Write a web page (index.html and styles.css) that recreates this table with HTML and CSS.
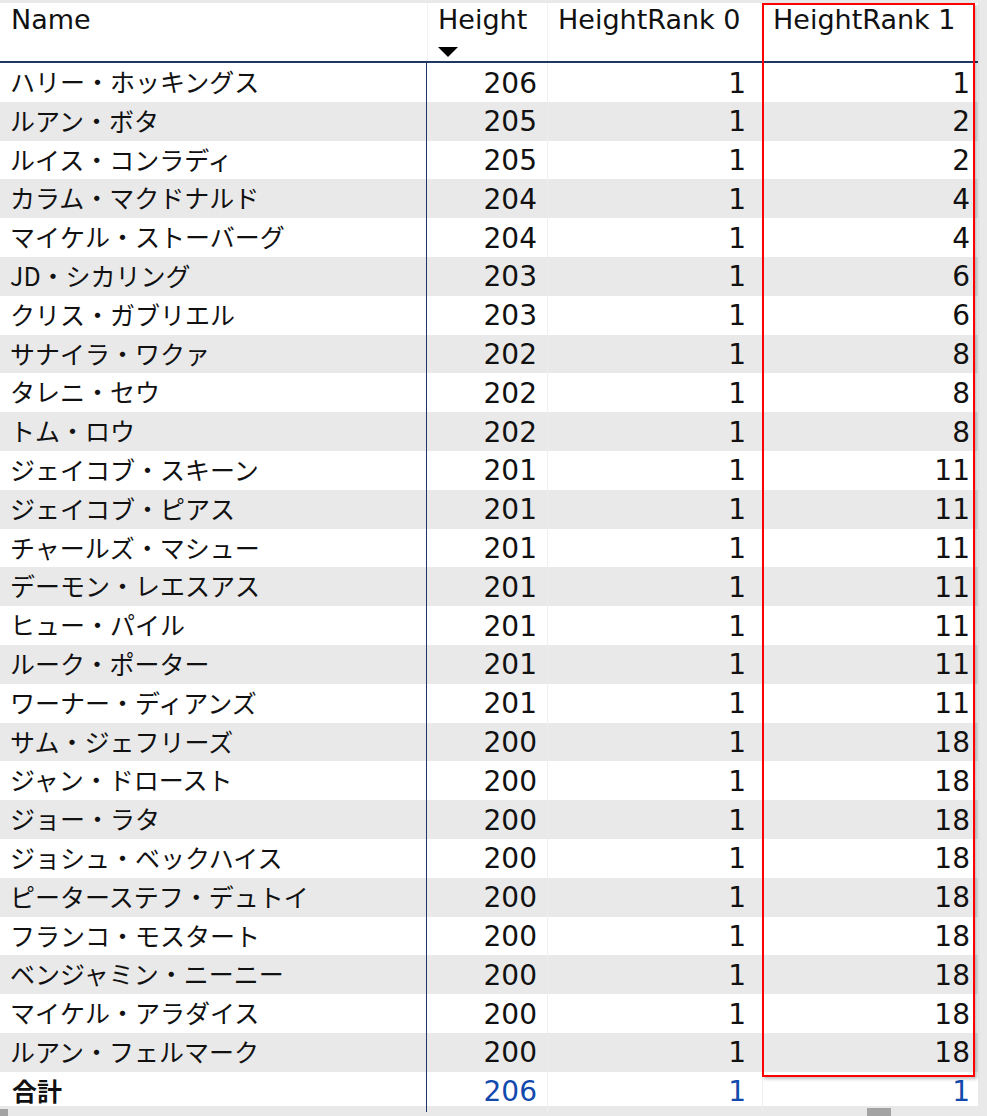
FILE: index.html
```html
<!DOCTYPE html>
<html lang="ja">
<head>
<meta charset="utf-8">
<title>Height table</title>
<link rel="stylesheet" href="styles.css">
</head>
<body>
<div class="page">
  <div class="table">
    <div class="head">
      <div class="hcell name-h">Name</div>
      <div class="hcell num-h">Height<span class="sort"></span></div>
      <div class="hcell num-h">HeightRank 0</div>
      <div class="hcell num-h">HeightRank 1</div>
    </div>
    <div class="body">
      <div class="row"><div class="c name">ハリー・ホッキングス</div><div class="c n h">206</div><div class="c n">1</div><div class="c n last">1</div></div>
      <div class="row alt"><div class="c name">ルアン・ボタ</div><div class="c n h">205</div><div class="c n">1</div><div class="c n last">2</div></div>
      <div class="row"><div class="c name">ルイス・コンラディ</div><div class="c n h">205</div><div class="c n">1</div><div class="c n last">2</div></div>
      <div class="row alt"><div class="c name">カラム・マクドナルド</div><div class="c n h">204</div><div class="c n">1</div><div class="c n last">4</div></div>
      <div class="row"><div class="c name">マイケル・ストーバーグ</div><div class="c n h">204</div><div class="c n">1</div><div class="c n last">4</div></div>
      <div class="row alt"><div class="c name">JD・シカリング</div><div class="c n h">203</div><div class="c n">1</div><div class="c n last">6</div></div>
      <div class="row"><div class="c name">クリス・ガブリエル</div><div class="c n h">203</div><div class="c n">1</div><div class="c n last">6</div></div>
      <div class="row alt"><div class="c name">サナイラ・ワクァ</div><div class="c n h">202</div><div class="c n">1</div><div class="c n last">8</div></div>
      <div class="row"><div class="c name">タレニ・セウ</div><div class="c n h">202</div><div class="c n">1</div><div class="c n last">8</div></div>
      <div class="row alt"><div class="c name">トム・ロウ</div><div class="c n h">202</div><div class="c n">1</div><div class="c n last">8</div></div>
      <div class="row"><div class="c name">ジェイコブ・スキーン</div><div class="c n h">201</div><div class="c n">1</div><div class="c n last">11</div></div>
      <div class="row alt"><div class="c name">ジェイコブ・ピアス</div><div class="c n h">201</div><div class="c n">1</div><div class="c n last">11</div></div>
      <div class="row"><div class="c name">チャールズ・マシュー</div><div class="c n h">201</div><div class="c n">1</div><div class="c n last">11</div></div>
      <div class="row alt"><div class="c name">デーモン・レエスアス</div><div class="c n h">201</div><div class="c n">1</div><div class="c n last">11</div></div>
      <div class="row"><div class="c name">ヒュー・パイル</div><div class="c n h">201</div><div class="c n">1</div><div class="c n last">11</div></div>
      <div class="row alt"><div class="c name">ルーク・ポーター</div><div class="c n h">201</div><div class="c n">1</div><div class="c n last">11</div></div>
      <div class="row"><div class="c name">ワーナー・ディアンズ</div><div class="c n h">201</div><div class="c n">1</div><div class="c n last">11</div></div>
      <div class="row alt"><div class="c name">サム・ジェフリーズ</div><div class="c n h">200</div><div class="c n">1</div><div class="c n last">18</div></div>
      <div class="row"><div class="c name">ジャン・ドロースト</div><div class="c n h">200</div><div class="c n">1</div><div class="c n last">18</div></div>
      <div class="row alt"><div class="c name">ジョー・ラタ</div><div class="c n h">200</div><div class="c n">1</div><div class="c n last">18</div></div>
      <div class="row"><div class="c name">ジョシュ・ベックハイス</div><div class="c n h">200</div><div class="c n">1</div><div class="c n last">18</div></div>
      <div class="row alt"><div class="c name">ピーターステフ・デュトイ</div><div class="c n h">200</div><div class="c n">1</div><div class="c n last">18</div></div>
      <div class="row"><div class="c name">フランコ・モスタート</div><div class="c n h">200</div><div class="c n">1</div><div class="c n last">18</div></div>
      <div class="row alt"><div class="c name">ベンジャミン・ニーニー</div><div class="c n h">200</div><div class="c n">1</div><div class="c n last">18</div></div>
      <div class="row"><div class="c name">マイケル・アラダイス</div><div class="c n h">200</div><div class="c n">1</div><div class="c n last">18</div></div>
      <div class="row alt"><div class="c name">ルアン・フェルマーク</div><div class="c n h">200</div><div class="c n">1</div><div class="c n last">18</div></div>
      <div class="row total"><div class="c name">合計</div><div class="c n h">206</div><div class="c n">1</div><div class="c n last">1</div></div>
    </div>
    <div class="highlight"></div>
  </div>
  <div class="hscroll">
    <div class="hs-left"></div>
    <div class="hs-thumb"></div>
  </div>
</div>
</body>
</html>
```

FILE: styles.css
```css
* { box-sizing: border-box; }

html, body {
  margin: 0;
  padding: 0;
  background: #e9e9e9;
}

.page {
  width: 987px;
  height: 1116px;
  padding-top: 3px;
  display: flex;
  flex-direction: column;
  overflow: hidden;
}

.table {
  position: relative;
  width: 978px;
  background: #ffffff;
}

.head,
.row {
  display: grid;
  grid-template-columns: 427px 120px 215px 216px;
}

.head {
  height: 60px;
  border-bottom: 2px solid #1f3763;
}

.hcell {
  font-family: "DejaVu Sans", "Noto Sans CJK JP", sans-serif;
  font-size: 27px;
  line-height: 33px;
  color: #111111;
  padding: 0 0 0 10px;
  white-space: nowrap;
}

.name-h { padding-left: 11px; }

.num-h { border-left: 1px solid #f2f2f2; }

.sort {
  display: block;
  width: 0;
  height: 0;
  margin: 11px 0 0 0;
  border-left: 10px solid transparent;
  border-right: 10px solid transparent;
  border-top: 10px solid #000000;
}

.row {
  height: 38.8px;
  background: #ffffff;
}

.row.alt { background: #e9e9e9; }

.c {
  display: flex;
  align-items: center;
  white-space: nowrap;
  color: #111111;
}

.name {
  font-family: "Noto Sans CJK JP", "Noto Sans", sans-serif;
  font-size: 25px;
  padding-left: 10px;
  padding-bottom: 4px;
  border-right: 1px solid #1f3763;
}

.n {
  justify-content: flex-end;
  font-family: "DejaVu Sans", sans-serif;
  font-size: 28px;
  padding-right: 16px;
  border-left: 1px solid #f0f0f0;
}

.n.h {
  padding-right: 10px;
  border-left: none;
}

.n.last { padding-right: 8px; }

.row.alt .n { border-left-color: #ececec; }
.row.alt .n.h { border-left: none; }

.row.total { height: 34px; }

.total .name {
  font-weight: 700;
  padding-left: 12px;
}

.total .n {
  color: #1249ad;
}

.highlight {
  position: absolute;
  left: 762px;
  top: 0;
  width: 213px;
  height: 1074px;
  border: 2px solid #ff0000;
  box-shadow: 2px 2px 3px rgba(0, 0, 0, 0.25);
  pointer-events: none;
}

.hscroll {
  flex: 1;
  display: flex;
  align-items: flex-end;
  background: #e9e9e9;
}

.hs-left {
  width: 8px;
  height: 7px;
  background: #a3a3a3;
}

.hs-thumb {
  width: 24px;
  height: 8px;
  margin-left: 859px;
  background: #a3a3a3;
}
```
